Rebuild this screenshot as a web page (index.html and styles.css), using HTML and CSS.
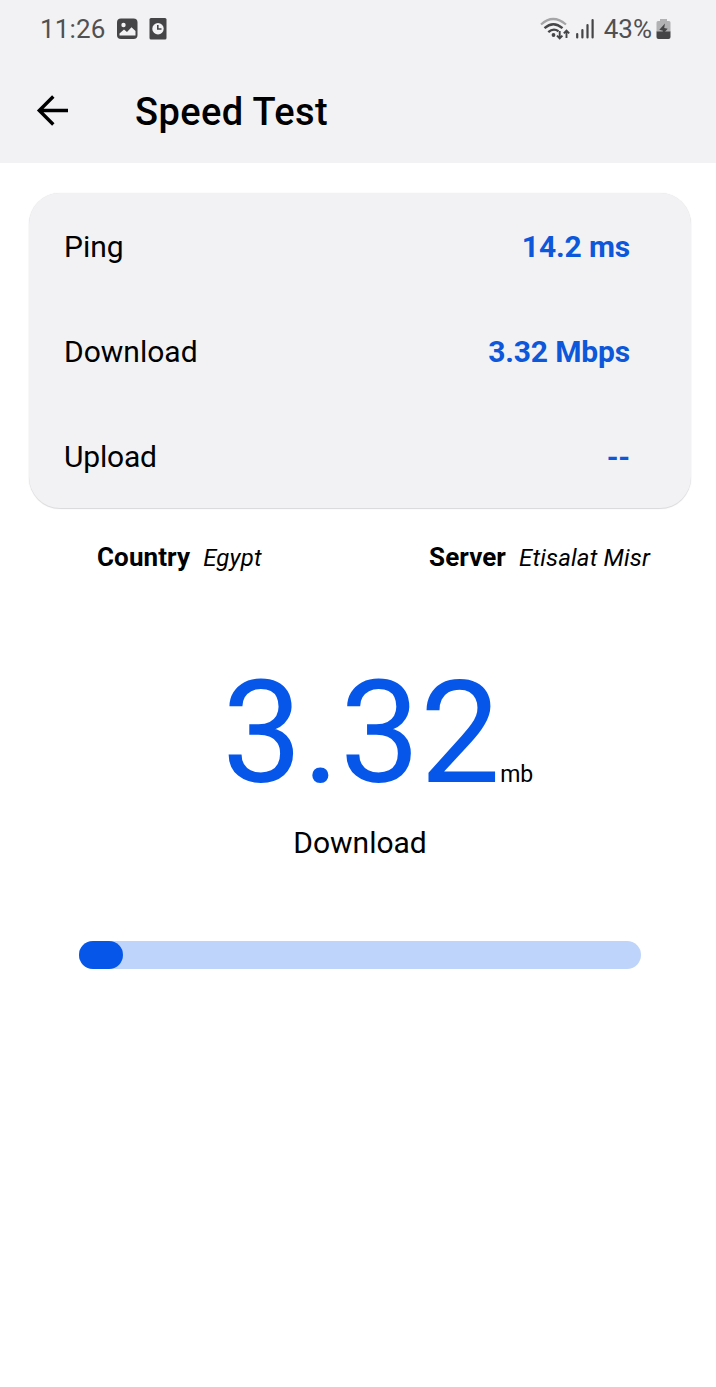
FILE: index.html
```html
<!DOCTYPE html>
<html lang="en">
<head>
<meta charset="utf-8">
<title>Speed Test</title>
<link rel="stylesheet" href="styles.css">
</head>
<body>
<header class="top">
  <div class="status">
    <span class="clock">11:26</span>
    <svg class="ic-photo" width="22" height="22" viewBox="0 0 22 22"><rect x="1" y="0.5" width="20.5" height="20.5" rx="4" fill="#454547"/><circle cx="7.5" cy="7" r="2.2" fill="#f2f2f4"/><path d="M3.500 17.500V15.500L8 11.500L11 14L15.500 9.200L19.500 13V17.500Z" fill="#f2f2f4"/></svg>
    <svg class="ic-clock" width="18" height="22" viewBox="0 0 18 22"><rect x="0.5" y="0" width="17" height="21.500" rx="1.500" fill="#454547"/><circle cx="9" cy="10.700" r="5.700" fill="#f2f2f4"/><path d="M8.800 7V11H12.500" fill="none" stroke="#454547" stroke-width="1.600"/></svg>
    <span class="spacer"></span>
    <svg class="ic-wifi" width="32" height="24" viewBox="0 0 32 24" fill="none"><path d="M1 7.500Q13 -3.500 26 7.500" stroke="#a5a5a8" stroke-width="2.200"/><path d="M4.500 11.200Q13.300 3.200 22.500 11.200" stroke="#454547" stroke-width="2.400"/><path d="M8.300 15.200Q13.300 10.600 18.500 14.200" stroke="#454547" stroke-width="2.400"/><circle cx="13.500" cy="18" r="1.900" fill="#454547"/><path d="M19.700 14V21.500M17 18.700L19.700 21.500L22.400 18.700M26.500 21V13.500M23.800 16.300L26.500 13.500L29.200 16.300" stroke="#454547" stroke-width="1.900"/></svg>
    <svg class="ic-signal" width="20" height="22" viewBox="0 0 20 22"><path d="M2.200 16V19.500M7.400 12V19.500M12.500 7V19.500M17.600 2V19.500" stroke="#454547" stroke-width="2.200" stroke-linecap="round"/></svg>
    <span class="pct">43%</span>
    <svg class="ic-batt" width="15" height="22" viewBox="0 0 15 22"><path d="M4 1H11V3H13Q14.500 3 14.500 4.500V14H0.500V4.500Q0.500 3 2 3H4Z" fill="#b2b2b5"/><path d="M0.500 13.500H14.500V19Q14.500 21 12.500 21H2.500Q0.500 21 0.500 19Z" fill="#454547"/><path d="M9 5.500L3.300 11.800L7 12.700L6 17L11.700 10.800L8.200 10Z" fill="#454547"/></svg>
  </div>
  <div class="bar">
    <svg class="back" width="34" height="32" viewBox="0 0 34 32" fill="none" stroke="#000" stroke-width="3.400"><path d="M32 15.500H4M17.300 1.500L3.300 15.500L17.300 29.500"/></svg>
    <h1 class="title">Speed Test</h1>
  </div>
</header>
<main>
  <section class="card">
    <div class="row"><span class="label">Ping</span><span class="value">14.2 ms</span></div>
    <div class="row"><span class="label">Download</span><span class="value">3.32 Mbps</span></div>
    <div class="row"><span class="label upload">Upload</span><span class="value">--</span></div>
  </section>
  <section class="meta">
    <div class="pair"><b class="key">Country</b><i class="info country">Egypt</i></div>
    <div class="pair"><b class="key">Server</b><i class="info server">Etisalat Misr</i></div>
  </section>
  <section class="reading">
    <span class="number">3.32</span><span class="unit">mb</span>
  </section>
  <p class="phase">Download</p>
  <div class="track"><div class="fill" style="width:44px"></div></div>
</main>
</body>
</html>
```

FILE: styles.css
```css
* { box-sizing: border-box; }
body { margin: 0; background: #fff; color: #000; font-family: Roboto, sans-serif; height: 1387px; }
.top { background: #f2f2f4; height: 163px; }
.status { display: flex; align-items: center; height: 58px; padding: 0 45px 0 40px; color: #505052; font-size: 26px; }
.clock { width: 76px; letter-spacing: 0.15px; }
.ic-clock { margin-left: 11px; }
.spacer { flex: 1; }
.ic-signal { margin: 0 8px 0 3px; }
.pct { letter-spacing: 0; margin-left: 1px; }
.ic-batt { margin-left: 4px; }
.bar { display: flex; align-items: center; height: 106px; padding-left: 36px; }
.title { margin: 2px 0 0 65px; font-size: 38px; font-weight: 500; letter-spacing: 0.4px; }
.card { width: 662px; height: 315px; margin: 30px 0 0 29px; padding: 0 61px 0 35px; border-radius: 31px; background: #f2f2f4; box-shadow: 0 1px 1px #d8d8da, 0 0 1px #dddddf; }
.row { display: flex; justify-content: space-between; align-items: center; height: 105px; padding-top: 2px; font-size: 30px; }
.upload { letter-spacing: -0.2px; }
.value { color: #0d57da; font-weight: 700; letter-spacing: -0.15px; }
.meta { display: flex; justify-content: space-between; margin: 34px 66px 0 97px; height: 31px; }
.pair { display: flex; align-items: baseline; gap: 13px; }
.key { font-size: 26px; letter-spacing: 0.1px; }
.info { font-size: 24px; letter-spacing: 0.16px; }
.reading { display: flex; align-items: baseline; margin: 76px 0 0 222px; height: 168px; line-height: 168px; }
.number { color: #0657e9; font-size: 143px; letter-spacing: -0.15px; }
.unit { font-size: 23px; letter-spacing: -0.2px; }
.phase { margin: 8px 0 0; text-align: center; font-size: 30px; line-height: 36px; padding-left: 4px; }
.track { width: 562px; height: 28px; margin: 80px 0 0 79px; border-radius: 14px; background: #bfd4fa; }
.fill { height: 28px; border-radius: 14px; background: #0657e9; }
```
